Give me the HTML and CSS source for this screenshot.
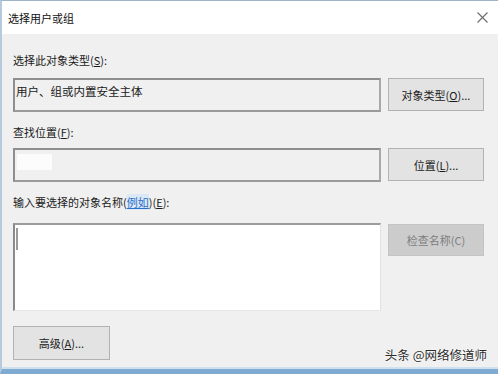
FILE: index.html
```html
<!DOCTYPE html>
<html lang="zh-CN">
<head>
<meta charset="utf-8">
<title>选择用户或组</title>
<link rel="stylesheet" href="styles.css">
</head>
<body>
<div class="window">
  <div class="titlebar">
    <span class="title">选择用户或组</span>
    <svg class="close" width="11" height="11" viewBox="0 0 11 11"><path d="M0.5 0.5 L10.5 10.5 M10.5 0.5 L0.5 10.5" stroke="#6b6b6b" stroke-width="1.1" fill="none"/></svg>
  </div>
  <div class="panel">
    <div class="label l1">选择此对象类型(<u>S</u>):</div>
    <div class="row r1">
      <div class="field">用户、组或内置安全主体</div>
      <button class="btn">对象类型(<u>O</u>)...</button>
    </div>
    <div class="label l2">查找位置(<u>F</u>):</div>
    <div class="row r2">
      <div class="field"><span class="redact"></span></div>
      <button class="btn">位置(<u>L</u>)...</button>
    </div>
    <div class="label l3">输入要选择的对象名称(<a class="link">例如</a>)(<u>E</u>):</div>
    <div class="row r3">
      <div class="textarea"><span class="caret"></span></div>
      <button class="btn disabled">检查名称(C)</button>
    </div>
    <div class="bottom">
      <button class="btn adv">高级(<u>A</u>)...</button>
    </div>
    <div class="watermark">头条 @网络修道师</div>
  </div>
</div>
</body>
</html>
```
FILE: styles.css
```css
* { box-sizing: border-box; }
html, body { margin: 0; padding: 0; }
body {
  width: 498px;
  height: 374px;
  overflow: hidden;
  font-family: "Noto Sans CJK SC", "Noto Sans", sans-serif;
  font-size: 11px;
  color: #1a1a1a;
  background: #f0f0f0;
}
.window {
  width: 498px;
  height: 374px;
  display: flex;
  flex-direction: column;
  border-top: 1px solid #9fb4c8;
  border-left: 2px solid #b7cadb;
  border-bottom: 5px solid #7fabd3;
  position: relative;
}
.titlebar {
  height: 33px;
  background: #fff;
  display: flex;
  align-items: center;
  justify-content: space-between;
  padding: 0 10px 0 6px;
  flex: none;
}
.title { font-size: 11px; color: #111; }
.close { display: block; }
.panel {
  flex: 1;
  background: #f0f0f0;
  padding: 0 14px 0 11px;
  position: relative;
  border-bottom: 2px solid #cfe0ee;
}
.label { height: 16px; line-height: 16px; white-space: nowrap; }
.l1 { margin-top: 18px; }
.l2 { margin-top: 12px; }
.l3 { margin-top: 12px; }
.row {
  display: grid;
  grid-template-columns: 368px 96px;
  column-gap: 7px;
  align-items: start;
}
.r1 { margin-top: 10px; }
.r2 { margin-top: 8px; }
.r3 { margin-top: 13px; }
.field {
  height: 34px;
  border: 2px solid #8e8e8e;
  border-right-color: #a9a9a9;
  border-bottom-color: #9a9a9a;
  background: #f0f0f0;
  padding: 3px 1px;
  font-size: 11.5px;
  line-height: 16px;
  white-space: nowrap;
}
.redact {
  display: block;
  width: 35px;
  height: 16px;
  margin-top: 1px;
  margin-left: 1px;
  background: #fcfcfc;
}
.btn {
  height: 33px;
  border: 1px solid #b2b2b2;
  background: #e3e3e3;
  font-family: inherit;
  font-size: 11px;
  color: #1a1a1a;
  padding: 0;
  margin: 0;
  white-space: nowrap;
}
.btn.disabled {
  height: 32px;
  margin-top: 1px;
  background: #cccccc;
  border-color: #c4c4c4;
  color: #7d7d7d;
}
.textarea {
  height: 88px;
  background: #fff;
  border-top: 2px solid #9c9c9c;
  border-left: 2px solid #8a8a8a;
  border-right: 1px solid #e2e2e2;
  border-bottom: 1px solid #e6e6e6;
  position: relative;
}
.caret {
  position: absolute;
  left: 1px;
  top: 3px;
  width: 2px;
  height: 22px;
  background: #9a9a9a;
}
.link { color: #2a6fc9; text-decoration: underline; background: #dbe8f7; }
.bottom { margin-top: 15px; }
.adv { width: 97px; height: 34px; }
.watermark {
  position: absolute;
  right: 11px;
  bottom: 3px;
  font-size: 12.5px;
  color: #2b2b2b;
  text-shadow: 0 0 2px #fff, 0 0 2px #fff;
  white-space: nowrap;
}
```
